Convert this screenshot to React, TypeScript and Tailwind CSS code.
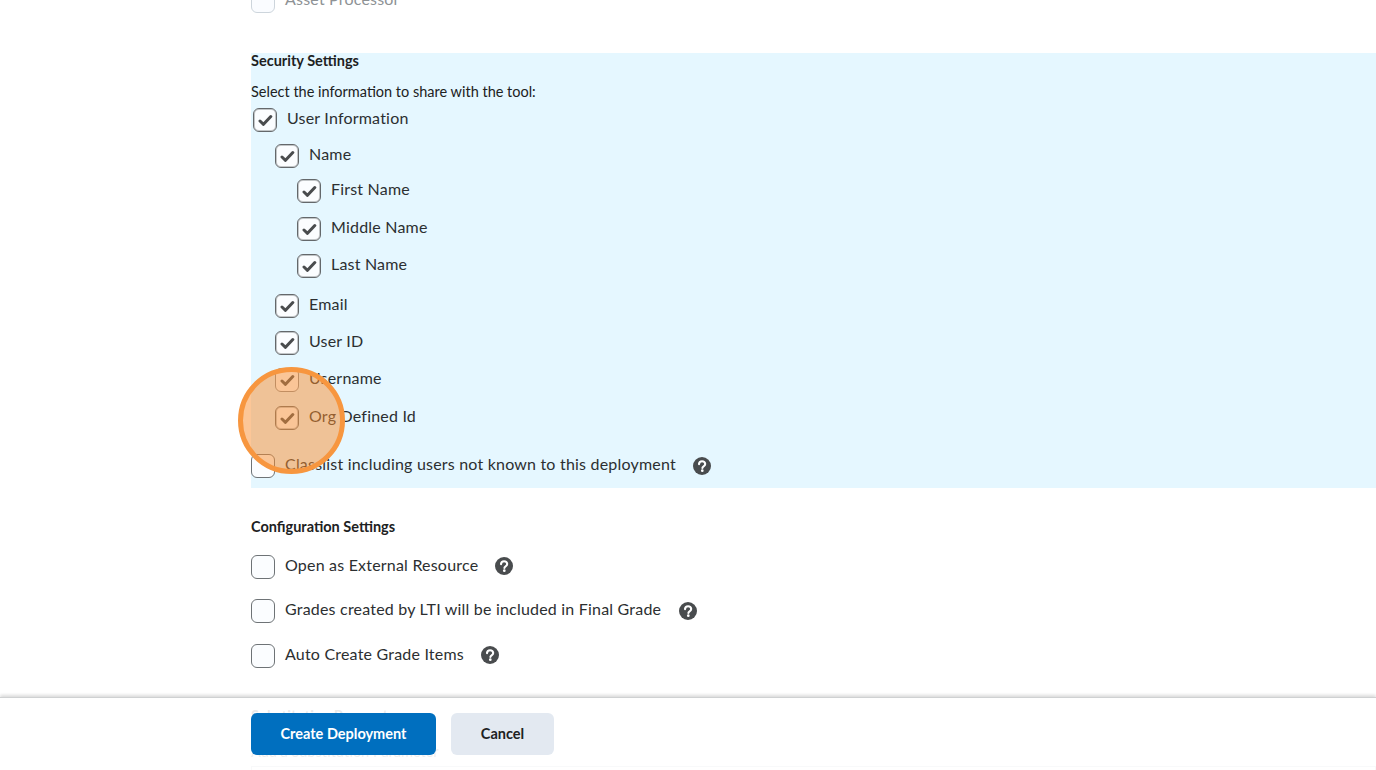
const font = { fontFamily: "Lato, 'Noto Sans', sans-serif" };

type Tone = "normal" | "muted" | "light";

function Check({ checked = false, tone = "normal" }: { checked?: boolean; tone?: Tone }) {
  const toneClass =
    tone === "muted"
      ? "border border-[#cdd5dc] bg-[#fafcff]"
      : tone === "light"
        ? "border border-[#8a8f93] bg-[#fbfdff]"
        : checked
          ? "border border-[#64686b] bg-[#fbfdff] shadow-[inset_0_0_0_1px_rgba(110,115,118,0.4)]"
          : "border border-[#6e7376] bg-[#fbfdff]";
  return (
    <span className={`flex h-6 w-6 shrink-0 translate-y-px items-center justify-center rounded-md ${toneClass}`}>
      {checked && (
        <svg width="15" height="13" viewBox="0 0 15 13" fill="none">
          <path d="M2 7 5.500 10.300 12.800 2.500" stroke="#494c4e" strokeWidth="3" strokeLinecap="round" strokeLinejoin="round" />
        </svg>
      )}
    </span>
  );
}

function Help({ className = "" }: { className?: string }) {
  return (
    <svg width="18" height="18" viewBox="0 0 18 18" className={`shrink-0 ${className}`}>
      <circle cx="9" cy="9" r="9" fill="#494c4e" />
      <path d="M6 7.100C6.100 5.200 7.500 4.200 9.100 4.200c1.800 0 3.100 1.100 3.100 2.700 0 1.300-.8 1.900-1.600 2.400-.8.500-1.200.9-1.200 1.700" fill="none" stroke="#fff" strokeWidth="2.100" strokeLinecap="round" />
      <circle cx="9.300" cy="13.700" r="1.350" fill="#fff" />
    </svg>
  );
}

const labelClass = "ml-2.5 -translate-y-px text-base leading-6 tracking-[0.2px] text-[#2c2f31]";
const headingClass = "text-[14.5px] font-bold leading-4 text-[#202122]";

function Row({ label, className, tone }: { label: string; className: string; tone?: Tone }) {
  return (
    <div className={`flex h-6 items-center ${className}`}>
      <Check checked tone={tone} />
      <span className={labelClass}>{label}</span>
    </div>
  );
}

function HelpRow({ label, className, helpClass = "ml-[17px]" }: { label: string; className: string; helpClass?: string }) {
  return (
    <div className={`flex h-6 items-center ${className}`}>
      <Check />
      <span className={labelClass}>{label}</span>
      <Help className={helpClass} />
    </div>
  );
}

export default function App() {
  return (
    <div className="relative h-[770px] w-full overflow-hidden bg-white" style={font}>
      <div className="pl-[251px]">
        <div className="-mt-3 flex h-6 items-center">
          <Check tone="muted" />
          <span className="ml-2.5 -translate-y-px text-base leading-6 tracking-[0.2px] text-[#8e9295]">Asset Processor</span>
        </div>

        <section className="mt-[41px] h-[435px] bg-[#e5f7ff]">
          <h2 className={headingClass}>Security Settings</h2>
          <p className="mt-[15px] text-[14.5px] leading-4 text-[#202122]">Select the information to share with the tool:</p>
          <Row label="User Information" className="mt-[7px] ml-0.5" />
          <Row label="Name" className="mt-3 ml-6" />
          <Row label="First Name" className="mt-[11px] ml-[46px]" />
          <Row label="Middle Name" className="mt-3.5 ml-[46px]" />
          <Row label="Last Name" className="mt-[13px] ml-[46px]" />
          <Row label="Email" className="mt-4 ml-6" />
          <Row label="User ID" className="mt-[13px] ml-6" />
          <Row label="Username" className="mt-[13px] ml-6" tone="light" />
          <Row label="Org Defined Id" className="mt-3.5 ml-6" />
          <HelpRow label="Classlist including users not known to this deployment" className="mt-6" helpClass="ml-[17px] translate-y-px" />
        </section>

        <h2 className={`mt-[31px] ${headingClass}`}>Configuration Settings</h2>
        <HelpRow label="Open as External Resource" className="mt-[19px]" />
        <HelpRow label="Grades created by LTI will be included in Final Grade" className="mt-5" helpClass="ml-[18px] translate-y-px" />
        <HelpRow label="Auto Create Grade Items" className="mt-[21px]" />
        <h2 className={`mt-[41px] ${headingClass}`}>Substitution Parameters</h2>
        <p className="mt-5 text-[14.5px] leading-4 text-[#494c4e]">Add a Substitution Parameter</p>
        <div className="mt-1.5 h-10 border border-[#b9c2d0]" />
      </div>

      <footer className="absolute inset-x-0 bottom-0 flex h-[73px] items-start gap-[15px] border-t border-[#cfd1d2] bg-white/90 pl-[251px] pt-[15px] shadow-[0_-2px_3px_rgba(0,0,0,0.14)]">
        <button className="h-[42px] w-[185px] rounded-md bg-[#006fbf] text-[14.5px] font-bold text-white">Create Deployment</button>
        <button className="h-[42px] w-[103px] rounded-md bg-[#e3e9f1] text-[14.5px] font-bold text-[#202122]">Cancel</button>
      </footer>

      <div className="absolute left-[238px] top-[367px] h-[107px] w-[107px] rounded-full border-[5px] border-[#f7963f] bg-[#f98e30]/50" />
    </div>
  );
}
